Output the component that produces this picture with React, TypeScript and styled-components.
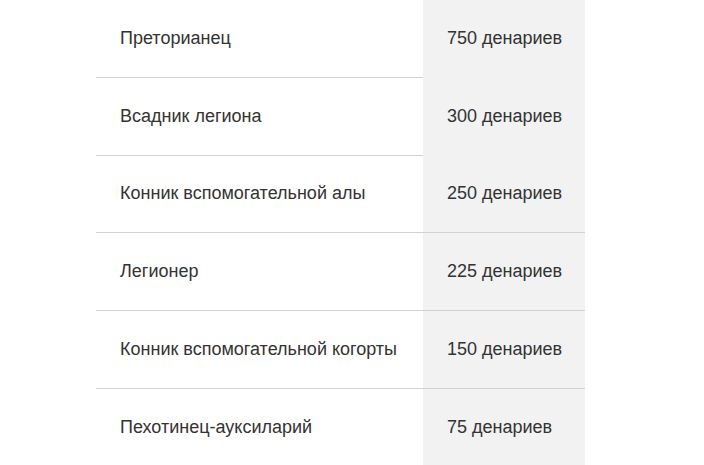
import React from 'react';
import styled, { createGlobalStyle } from 'styled-components'

const GlobalStyle = createGlobalStyle`
  html, body {
    margin: 0;
    padding: 0;
    background: #fff;
    overflow: hidden;
  }
`

const Page = styled.div`
  width: 704px;
  height: 465px;
  overflow: hidden;
  padding-left: 96px;
  box-sizing: border-box;
  font-family: "Liberation Sans", Arial, sans-serif;
  font-size: 18px;
  color: #333;
`

const Table = styled.div`
  width: 489px;
  display: flex;
  flex-direction: column;
`

const Row = styled.div`
  display: grid;
  grid-template-columns: 327px 162px;
  height: 77.75px;
`

const Cell = styled.div<{ $shaded?: boolean; $border?: boolean }>`
  display: flex;
  align-items: center;
  padding-left: 24px;
  box-sizing: border-box;
  background: ${p => (p.$shaded ? '#f2f2f2' : 'transparent')};
  border-bottom: 1px solid ${p => (p.$border ? '#d2d2d2' : 'transparent')};
`

const rows = [
  { name: 'Преторианец', pay: '750 денариев', full: false },
  { name: 'Всадник легиона', pay: '300 денариев', full: false },
  { name: 'Конник вспомогательной алы', pay: '250 денариев', full: true },
  { name: 'Легионер', pay: '225 денариев', full: true },
  { name: 'Конник вспомогательной когорты', pay: '150 денариев', full: true },
  { name: 'Пехотинец-ауксиларий', pay: '75 денариев', full: false },
]

export default function App() {
  return (
    <Page>
      <GlobalStyle />
      <Table>
        {rows.map((r, i) => {
          const last = i === rows.length - 1
          return (
            <Row key={r.name}>
              <Cell $border={!last}>{r.name}</Cell>
              <Cell $shaded $border={r.full}>{r.pay}</Cell>
            </Row>
          )
        })}
      </Table>
    </Page>
  )
}
